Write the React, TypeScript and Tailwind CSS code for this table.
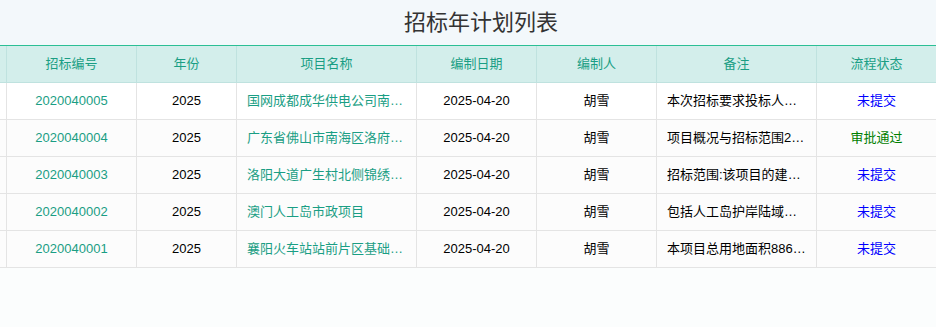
import React from "react";

const rows = [
  {
    code: "2020040005",
    year: "2025",
    name: "国网成都成华供电公司南门片区配网改造项目",
    date: "2025-04-20",
    person: "胡雪",
    note: "本次招标要求投标人具有相应资质等级",
    status: "未提交",
  },
  {
    code: "2020040004",
    year: "2025",
    name: "广东省佛山市南海区洛府路道路工程",
    date: "2025-04-20",
    person: "胡雪",
    note: "项目概况与招标范围2025年度工程",
    status: "审批通过",
  },
  {
    code: "2020040003",
    year: "2025",
    name: "洛阳大道广生村北侧锦绣花园项目",
    date: "2025-04-20",
    person: "胡雪",
    note: "招标范围:该项目的建设内容包括",
    status: "未提交",
  },
  {
    code: "2020040002",
    year: "2025",
    name: "澳门人工岛市政项目",
    date: "2025-04-20",
    person: "胡雪",
    note: "包括人工岛护岸陆域形成工程",
    status: "未提交",
  },
  {
    code: "2020040001",
    year: "2025",
    name: "襄阳火车站站前片区基础设施项目",
    date: "2025-04-20",
    person: "胡雪",
    note: "本项目总用地面积8865平方米",
    status: "未提交",
  },
];

const headers = ["招标编号", "年份", "项目名称", "编制日期", "编制人", "备注", "流程状态"];

const grid = "grid grid-cols-[6px_130px_100px_180px_120px_120px_160px_120px]";

export default function App() {
  return (
    <div
      className="w-[936px] h-[327px] bg-[#fbfdfd] overflow-hidden"
      style={{ fontFamily: '"Liberation Sans", "Noto Sans CJK SC", sans-serif' }}
    >
      <div className="h-[45px] bg-[#f3f8fb] flex items-center justify-center pl-[26px]">
        <span className="text-[22px] text-[#333333] leading-none">招标年计划列表</span>
      </div>
      <div className="border-t border-[#2bbf95]">
        <div className={`${grid} h-[37px] bg-[#d3eeeb] border-b border-[#bfe2df] text-[13px] text-[#1a9e84]`}>
          <div />
          {headers.map((h) => (
            <div key={h} className="border-l border-[#bfe2df] flex items-center justify-center">
              {h}
            </div>
          ))}
        </div>
        {rows.map((r, i) => (
          <div
            key={r.code}
            className={`${grid} h-[37px] border-b border-[#e4e4e4] text-[13px] text-black ${
              i === 0 ? "bg-white" : "bg-[#fcfcfc]"
            }`}
          >
            <div />
            <div className="border-l border-[#e4e4e4] flex items-center justify-center text-[#1a9e84]">
              {r.code}
            </div>
            <div className="border-l border-[#e4e4e4] flex items-center justify-center">{r.year}</div>
            <div className="border-l border-[#e4e4e4] flex items-center px-[10px] min-w-0 text-[#1a9e84]">
              <span className="truncate">{r.name}</span>
            </div>
            <div className="border-l border-[#e4e4e4] flex items-center justify-center">{r.date}</div>
            <div className="border-l border-[#e4e4e4] flex items-center justify-center">{r.person}</div>
            <div className="border-l border-[#e4e4e4] flex items-center px-[10px] min-w-0">
              <span className="truncate">{r.note}</span>
            </div>
            <div
              className={`border-l border-[#e4e4e4] flex items-center justify-center ${
                r.status === "审批通过" ? "text-[#008000]" : "text-[#0000ff]"
              }`}
            >
              {r.status}
            </div>
          </div>
        ))}
      </div>
    </div>
  );
}
